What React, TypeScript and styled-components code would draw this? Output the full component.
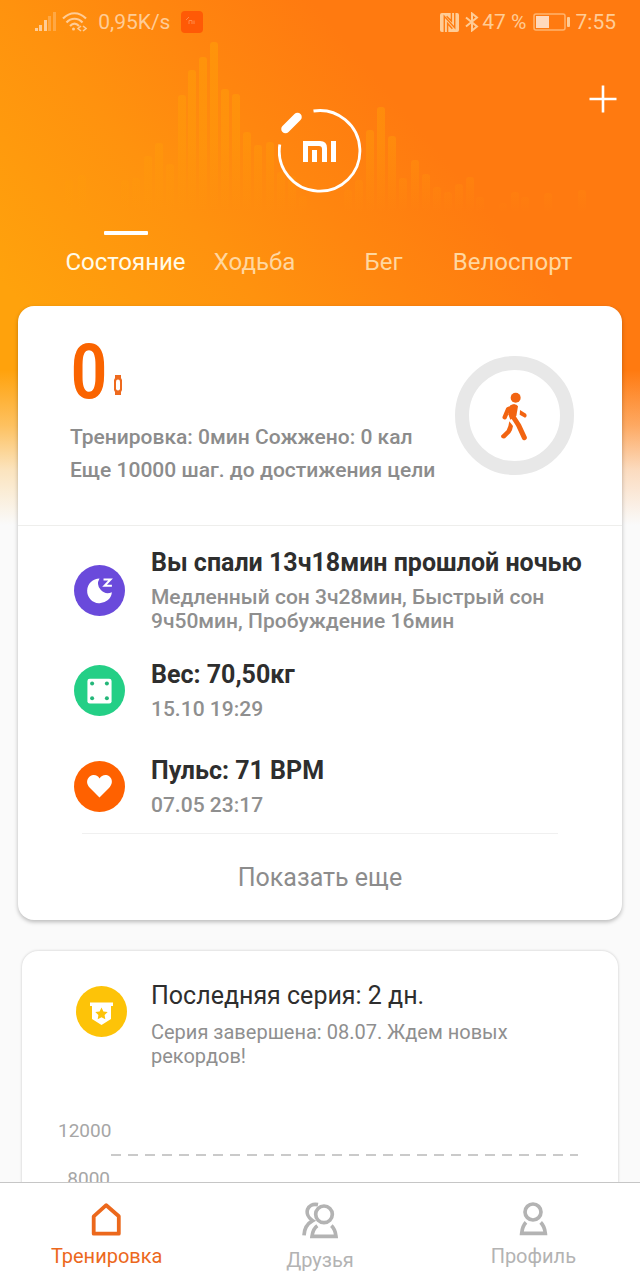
import React from "react";
import styled, { createGlobalStyle } from "styled-components";

const GlobalStyle = createGlobalStyle`
  * { box-sizing: border-box; }
  body { margin: 0; background: #fafafa; font-family: Roboto, "Noto Sans", sans-serif; }
  h2, h3, p, ul { margin: 0; padding: 0; }
  ul { list-style: none; }
  button { border: 0; padding: 0; background: none; font-family: inherit; cursor: pointer; }
  svg { display: block; }
`;

const Screen = styled.div`
  display: flex;
  flex-direction: column;
  height: 100vh;
`;

const Content = styled.main`
  position: relative;
  flex: 1;
  min-height: 0;
  overflow-y: auto;
  scrollbar-width: none;
  background:
    linear-gradient(to bottom, rgba(250, 250, 250, 0) 370px, rgba(250, 250, 250, 0.35) 425px, rgba(250, 250, 250, 0.75) 470px, #fafafa 525px),
    linear-gradient(50deg, #ffa20c 20%, #ff920e 42%, #ff860f 55%, #ff7a10 70%) top / 100% 540px no-repeat #fafafa;
`;

const WaveBars = styled.svg`
  position: absolute;
  top: 0;
  left: 0;
  width: 100%;
  height: 230px;
`;

const StatusBar = styled.div`
  position: relative;
  display: flex;
  justify-content: space-between;
  height: 44px;
  padding: 0 24px 0 35px;
  color: #ffcc96;
  font-size: 21px;
  line-height: 24px;
`;

const StatusGroup = styled.div<{ $gap: number }>`
  display: flex;
  align-items: center;
  gap: ${(p) => p.$gap}px;
`;

const TitleBar = styled.header`
  position: relative;
  display: grid;
  grid-template-columns: 1fr auto 1fr;
  height: 187px;
  padding: 40px 22px 0;
`;

const Logo = styled.svg`
  grid-column: 2;
  margin-top: 23px;
`;

const AddButton = styled.button`
  justify-self: end;
  align-self: start;
`;

const Tabs = styled.nav`
  position: relative;
  display: grid;
  grid-template-columns: repeat(4, 1fr);
  padding: 0 63px 0 61px;
  height: 75px;
`;

const Tab = styled.button<{ $active?: boolean }>`
  display: flex;
  flex-direction: column;
  align-items: center;
  gap: 12px;
  font-size: 24px;
  line-height: 30px;
  color: ${(p) => (p.$active ? "#fffbe8" : "#ffd7a0")};

  &::before {
    content: "";
    width: 44px;
    height: 4px;
    border-radius: 1px;
    background: ${(p) => (p.$active ? "#fff" : "transparent")};
  }
`;

const Card = styled.section<{ $inset: number }>`
  position: relative;
  margin: 0 ${(p) => p.$inset}px 31px;
  border-radius: 16px;
  background: #fff;
  box-shadow: 0 2px 4px rgba(0, 0, 0, 0.26);
`;

const StreakCard = styled(Card)`
  padding: 29px 36px 40px;
  box-shadow: 0 0 3px rgba(0, 0, 0, 0.2);
`;

const Summary = styled.div`
  display: flex;
  align-items: center;
  justify-content: space-between;
  padding: 32px 48px 32px 52px;
  border-bottom: 1px solid #eeeeec;
`;

const SummaryText = styled.div`
  padding-bottom: 6px;
  font-size: 21px;
  font-weight: 500;
  line-height: 33px;
  color: #8c8c8c;
`;

const Steps = styled.div`
  display: flex;
  align-items: flex-end;
  gap: 6px;
  margin-bottom: 15px;
  font-family: "Roboto Condensed", Roboto, sans-serif;
  font-size: 76px;
  font-weight: 500;
  line-height: 68px;
  color: #fa6400;

  svg { margin-bottom: 11px; }
`;

const Ring = styled.div`
  display: grid;
  place-items: center;
  width: 119px;
  height: 119px;
  border: 14px solid #e8e8e8;
  border-radius: 50%;
`;

const Metrics = styled.ul`
  padding: 12px 20px 0 56px;
`;

const Metric = styled.li`
  display: flex;
  align-items: center;
  gap: 26px;
  min-height: 96px;
  padding: 9px 0;
`;

const MetricIcon = styled.svg`
  flex: none;
  width: 51px;
  height: 51px;
`;

const MetricTitle = styled.h3<{ $light?: boolean }>`
  margin-bottom: 6px;
  font-size: 25px;
  font-weight: ${(p) => (p.$light ? 400 : 700)};
  line-height: 32px;
  color: #2e2e2e;
`;

const MetricNote = styled.p<{ $light?: boolean }>`
  font-size: ${(p) => (p.$light ? 20 : 21)}px;
  font-weight: ${(p) => (p.$light ? 400 : 500)};
  line-height: 24px;
  color: #8f8f8f;
`;

const ShowMore = styled.button`
  display: block;
  width: calc(100% - 128px);
  height: 87px;
  margin: -1px 64px 0;
  border-top: 1px solid #f0f0f0;
  font-size: 25px;
  color: #8c8c8c;
`;

const Streak = styled.div`
  display: flex;
  align-items: flex-start;
  gap: 24px;
  padding: 0 18px;

  svg { margin-top: 6px; }
  h3 { margin-bottom: 8px; }
`;

const Chart = styled.div`
  display: grid;
  grid-template-columns: 52px 1fr;
  grid-auto-rows: 24px;
  row-gap: 24px;
  margin-top: 51px;
  padding-right: 4px;
`;

const AxisLabel = styled.span`
  grid-column: 1;
  text-align: right;
  font-size: 19px;
  line-height: 24px;
  color: #a6a6a6;
`;

const GoalLine = styled.div`
  grid-column: 2;
  grid-row: 1 / 3;
  align-self: center;
  height: 2px;
  margin-left: 1px;
  background: repeating-linear-gradient(to right, #cacaca 0 10px, transparent 10px 17px);
`;

const BottomNav = styled.nav`
  display: grid;
  grid-template-columns: repeat(3, 1fr);
  flex: none;
  height: 98px;
  border-top: 1px solid #c6c6c6;
  background: #fff;
`;

const NavItem = styled.a<{ $active?: boolean }>`
  display: flex;
  flex-direction: column;
  align-items: center;
  gap: 8px;
  padding-top: 19px;
  font-size: 20px;
  line-height: 24px;
  text-decoration: none;
  color: ${(p) => (p.$active ? "#ec681c" : "#b3b3b3")};
`;

const bars: [number, number][] = [
  [69, 180], [82, 175], [125, 180], [136, 178], [148, 156], [159, 143], [170, 164],
  [182, 95], [192, 70], [203, 57], [214, 42], [225, 89], [236, 94], [247, 132],
  [258, 145], [270, 142], [281, 172], [292, 176], [303, 196], [348, 190], [359, 180],
  [370, 130], [381, 107], [392, 136], [403, 178], [415, 160], [426, 174], [437, 187],
  [448, 192], [459, 184], [470, 177], [480, 197], [503, 203], [515, 192], [525, 197],
  [548, 193], [582, 190],
];

const metrics = [
  {
    title: "Вы спали 13ч18мин прошлой ночью",
    note: "Медленный сон 3ч28мин, Быстрый сон 9ч50мин, Пробуждение 16мин",
    icon: (
      <MetricIcon viewBox="74 71 152 152">
        <circle cx="150" cy="147" r="76" fill="#6a4adb" />
        <path d="M150 111A37 37 0 1 0 187 152A29 29 0 0 1 150 111Z" fill="#fff" />
        <path d="M162 114H183L165 133H187" fill="none" stroke="#fff" strokeWidth="6" />
      </MetricIcon>
    ),
  },
  {
    title: "Вес: 70,50кг",
    note: "15.10 19:29",
    icon: (
      <MetricIcon viewBox="74 373 152 152">
        <circle cx="150" cy="449" r="76" fill="#24cf86" />
        <rect x="114" y="414" width="72" height="74" rx="7" fill="#fff" />
        <g fill="#24b679">
          <circle cx="128" cy="428" r="6" />
          <circle cx="172" cy="428" r="6" />
          <circle cx="128" cy="472" r="6" />
          <circle cx="172" cy="472" r="6" />
        </g>
      </MetricIcon>
    ),
  },
  {
    title: "Пульс: 71 BPM",
    note: "07.05 23:17",
    icon: (
      <MetricIcon viewBox="74 660 152 152">
        <circle cx="150" cy="736" r="76" fill="#ff6100" />
        <path
          d="M150 769L121 740C103 720 120 702 133 702C141 702 147 706 150 712C154 706 160 702 168 702C181 702 197 720 179 740Z"
          fill="#fff"
        />
      </MetricIcon>
    ),
  },
];

export default function App() {
  return (
    <Screen>
      <GlobalStyle />
      <Content>
        <WaveBars viewBox="0 0 640 230" aria-hidden="true">
          <defs>
            <linearGradient id="bar" gradientUnits="userSpaceOnUse" x1="0" y1="40" x2="0" y2="212">
              <stop offset="0" stopColor="#ff9e08" stopOpacity="0.6" />
              <stop offset="0.6" stopColor="#ff9e08" stopOpacity="0.4" />
              <stop offset="1" stopColor="#ff9e08" stopOpacity="0" />
            </linearGradient>
          </defs>
          {bars.map(([x, top]) => (
            <rect key={x} x={x - 4} y={top} width="8" height={212 - top} rx="3" fill="url(#bar)" />
          ))}
        </WaveBars>

        <StatusBar>
          <StatusGroup $gap={6}>
            <svg width="21" height="20" viewBox="0 0 21 20" fill="currentColor">
              <rect x="0" y="16" width="3" height="3" />
              <rect x="4" y="13" width="3" height="6" />
              <rect x="9" y="8" width="3" height="11" />
              <rect x="13" y="4" width="3" height="15" opacity="0.4" />
              <rect x="18" y="0" width="3" height="19" opacity="0.4" />
            </svg>
            <svg width="25" height="20" viewBox="0 0 25 20" fill="none" stroke="currentColor" strokeWidth="2.2">
              <path d="M1 6.500C8-.5 17-.5 24 6.500M4.500 10.500C9 5.500 16 5.500 20.500 10.500M8 14C11 11 14 11 17 14" />
              <circle cx="11.500" cy="17" r="1.500" fill="currentColor" stroke="none" />
              <path d="M19 14L16 16.500L19 19M21 14L24 16.500L21 19" strokeWidth="1.600" />
            </svg>
            <StatusGroup $gap={11}>
              <span>&nbsp;0,95K/s</span>
              <svg width="22" height="22" viewBox="0 0 22 22">
                <rect width="22" height="22" rx="4" fill="#ff5a06" />
                <path d="M5 9L8 6M8 13V9.500H11V13M13 9.500V13" fill="none" stroke="#ff8a4a" strokeWidth="1" />
              </svg>
            </StatusGroup>
          </StatusGroup>
          <StatusGroup $gap={6}>
            <svg width="19" height="19" viewBox="0 0 20 20">
              <path d="M2 0H18Q20 0 20 2V18Q20 20 18 20H2Q0 20 0 18V2Q0 0 2 0Z" fill="currentColor" />
              <path d="M4.500 20V3.500L15.500 15.500V0M8 20V11L13 16.500M12 0V8.500L7 3.500" fill="none" stroke="#ff7c10" strokeWidth="1.500" />
            </svg>
            <StatusGroup $gap={3}>
              <svg width="14" height="20" viewBox="0 0 14 20" fill="none" stroke="currentColor" strokeWidth="2">
                <path d="M1 5.500L12 14.500L7 18.500V1.500L12 5.500L1 14.500" />
              </svg>
              <span>47 %</span>
            </StatusGroup>
            <svg width="37" height="18" viewBox="0 0 37 18">
              <rect x="1" y="1" width="31" height="16" rx="2" fill="none" stroke="currentColor" strokeWidth="1.500" opacity="0.7" />
              <rect x="3" y="3" width="13" height="12" fill="#ffd9bd" />
              <rect x="34" y="4" width="3" height="10" rx="1" fill="currentColor" />
            </svg>
            <span>7:55</span>
          </StatusGroup>
        </StatusBar>

        <TitleBar>
          <Logo width="84" height="86" viewBox="278 107 84 86" role="img" aria-label="Mi">
            <path d="M279.800 144.500A40.300 40.300 0 1 0 313.500 111" fill="none" stroke="#fff" strokeWidth="2.800" />
            <path d="M285.500 129L297.500 117" stroke="#fff" strokeWidth="8.500" strokeLinecap="round" />
            <path d="M303 141H320Q327 141 327 148V162H322V149Q322 146 319 146H308V162H303ZM312 150H317V162H312ZM331 141H336V162H331Z" fill="#fff" />
          </Logo>
          <AddButton aria-label="Добавить">
            <svg width="30" height="30" viewBox="0 0 30 30" stroke="#fff" strokeWidth="2.600">
              <path d="M15 1.500V28.500M1.500 15H28.500" />
            </svg>
          </AddButton>
        </TitleBar>

        <Tabs>
          <Tab $active>Состояние</Tab>
          <Tab>Ходьба</Tab>
          <Tab>Бег</Tab>
          <Tab>Велоспорт</Tab>
        </Tabs>

        <Card $inset={18}>
          <Summary>
            <SummaryText>
              <Steps>
                <span>0</span>
                <svg width="8" height="20" viewBox="0 0 8 20">
                  <path d="M1 0H7V3L8 5V15L7 17V20H1V17L0 15V5L1 3Z" fill="#ee6a1e" />
                  <rect x="2" y="4.500" width="4" height="11" rx="2" fill="#fff" />
                </svg>
              </Steps>
              <p>Тренировка: 0мин Сожжено: 0 кал</p>
              <p>Еще 10000 шаг. до достижения цели</p>
            </SummaryText>
            <Ring>
              <svg width="32" height="50" viewBox="298 270 96 150" fill="none" stroke="#f26411" strokeLinecap="round" strokeLinejoin="round">
                <circle cx="348" cy="290" r="15" fill="#f26411" stroke="none" />
                <path d="M332 313Q348 305 355 316L350 345L332 356L326 340Z" fill="#f26411" stroke="none" />
                <path d="M342 317L325 325L315 349" strokeWidth="13" />
                <path d="M337 342Q350 362 357 373L374 410" strokeWidth="15" />
                <path d="M329 361L340 375Q338 389 332 396L316 412Q304 414 304 404L321 388Q327 378 329 361Z" fill="#f26411" stroke="none" />
                <path d="M361 327L379 338Q384 345 376 350L360 341Z" fill="#f26411" stroke="none" />
              </svg>
            </Ring>
          </Summary>
          <Metrics>
            {metrics.map((m) => (
              <Metric key={m.title}>
                {m.icon}
                <div>
                  <MetricTitle>{m.title}</MetricTitle>
                  <MetricNote>{m.note}</MetricNote>
                </div>
              </Metric>
            ))}
          </Metrics>
          <ShowMore>Показать еще</ShowMore>
        </Card>

        <StreakCard $inset={22}>
          <Streak>
            <MetricIcon viewBox="0 0 51 51">
              <circle cx="25.500" cy="25.500" r="25.500" fill="#fdc308" />
              <path d="M14 16.500H37V20H35V33L25.500 39L16 33V20H14Z" fill="#fff" />
              <path d="M25.500 21.500L27.400 25.400L31.700 26L28.600 29L29.300 33.300L25.500 31.300L21.700 33.300L22.400 29L19.300 26L23.600 25.400Z" fill="#fdc308" />
            </MetricIcon>
            <div>
              <MetricTitle $light>Последняя серия: 2 дн.</MetricTitle>
              <MetricNote $light>Серия завершена: 08.07. Ждем новых рекордов!</MetricNote>
            </div>
          </Streak>
          <Chart>
            <AxisLabel>12000</AxisLabel>
            <GoalLine />
            <AxisLabel>8000</AxisLabel>
          </Chart>
        </StreakCard>
      </Content>

      <BottomNav>
        <NavItem href="#training" $active>
          <svg width="33" height="34" viewBox="0 0 33 34" fill="none" stroke="currentColor" strokeWidth="3.800" strokeLinejoin="round">
            <path d="M3.700 14.300L16.200 3.200L28.800 14.300V31.700H3.700Z" />
          </svg>
          Тренировка
        </NavItem>
        <NavItem href="#friends">
          <svg width="38" height="38" viewBox="94 96 114 114" fill="none" stroke="currentColor" strokeWidth="11">
            <circle cx="163" cy="133" r="25" />
            <path d="M145 104C112 97 100 133 129 152C111 162 104 176 103 196" />
            <path d="M143 167C133 174 128 190 127 199H199C198 190 194 175 185 167" />
          </svg>
          Друзья
        </NavItem>
        <NavItem href="#profile">
          <svg width="34" height="34" viewBox="738 96 102 102" fill="none" stroke="currentColor" strokeWidth="11">
            <circle cx="789" cy="126" r="24" />
            <path d="M768 157C760 165 756 180 755 190H826C825 180 820 165 812 157" />
          </svg>
          Профиль
        </NavItem>
      </BottomNav>
    </Screen>
  );
}
